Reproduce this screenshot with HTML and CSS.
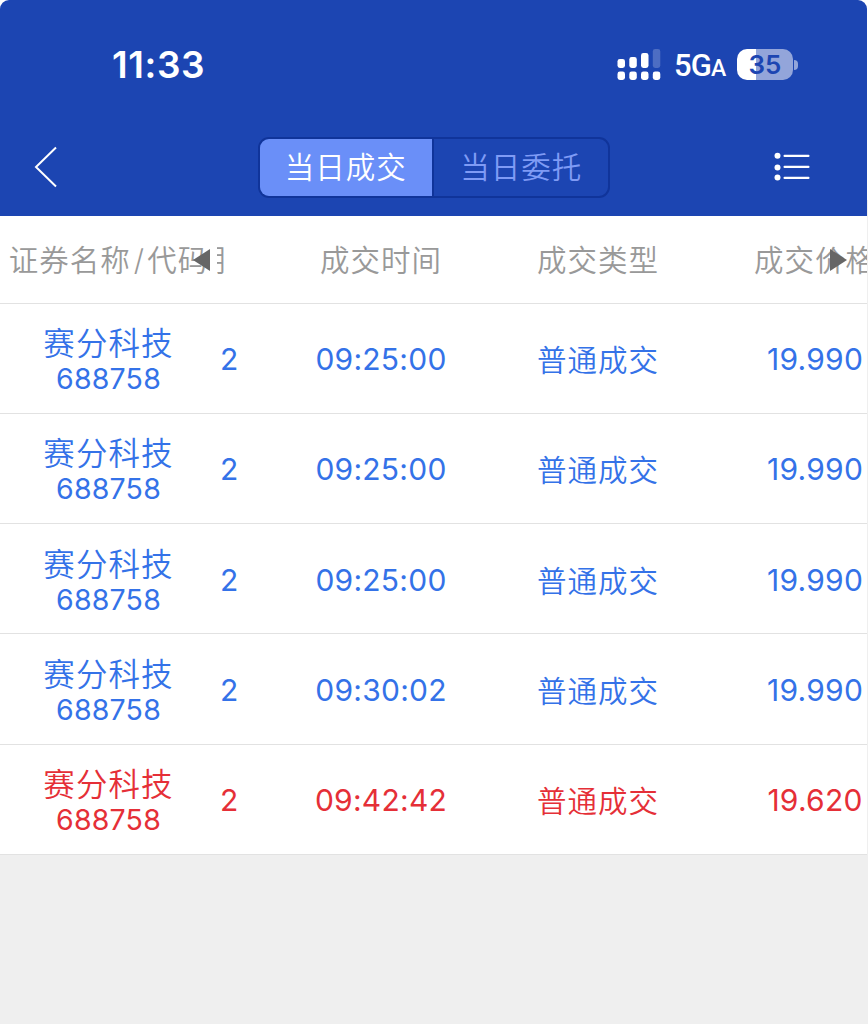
FILE: index.html
```html
<!DOCTYPE html>
<html lang="zh-CN">
<head>
  <meta charset="UTF-8">
  <meta name="viewport" content="width=device-width, initial-scale=1.0">
  <title>当日成交</title>
  <link rel="stylesheet" href="styles.css">
</head>
<body>

  <!-- Top area -->
  <header class="top">
    <div class="status-bar">
      <span class="clock">11:33</span>
      <div class="status-right">
        <svg class="signal" width="44" height="32" viewBox="0 0 44 32" fill="#fff">
          <rect x="0.5" y="10" width="7.5" height="9" rx="2.4"/>
          <rect x="12.3" y="8" width="7.5" height="11" rx="2.4"/>
          <rect x="24" y="4" width="7.5" height="15" rx="2.4"/>
          <rect x="35.8" y="0" width="7.5" height="19" rx="2.4" fill-opacity="0.22"/>
          <rect x="0.5" y="22.5" width="7.5" height="8.5" rx="2.4"/>
          <rect x="12.3" y="22.5" width="7.5" height="8.5" rx="2.4"/>
          <rect x="24" y="22.5" width="7.5" height="8.5" rx="2.4"/>
          <rect x="35.8" y="22.5" width="7.5" height="8.5" rx="2.4"/>
        </svg>
        <span class="network">5G<small>A</small></span>
        <span class="battery">35</span>
        <span class="battery-tip"></span>
      </div>
    </div>
    <nav class="nav-bar">
      <svg class="back" width="24" height="42" viewBox="0 0 24 42" fill="none" stroke="#fff" stroke-width="2">
        <path d="M22 1.5 L2 21 L22 40.5"/>
      </svg>
      <div class="tabs">
        <span class="tab active">当日成交</span>
        <span class="tab">当日委托</span>
      </div>
      <svg class="menu" width="36" height="30" viewBox="0 0 36 30" fill="#fff">
        <circle cx="3.5" cy="3.7" r="3"/>
        <circle cx="3.5" cy="15.4" r="3"/>
        <circle cx="3.5" cy="25.6" r="3"/>
        <rect x="9.5" y="2.8" width="26" height="2.3" rx="1"/>
        <rect x="9.5" y="13.8" width="26" height="2.3" rx="1"/>
        <rect x="9.5" y="24.8" width="26" height="2.3" rx="1"/>
      </svg>
    </nav>
  </header>

  <!-- Trade list -->
  <main class="table">
    <div class="row head">
      <div class="name">证券名称<span class="slash">/</span>代码</div>
      <div class="date"><span>期</span></div>
      <div class="cell">成交时间</div>
      <div class="cell">成交类型</div>
      <div class="cell">成交价格</div>
      <i class="arrow arrow-left"></i>
      <i class="arrow arrow-right"></i>
    </div>
    <div class="row buy">
      <div class="name">赛分科技<span class="code">688758</span></div>
      <div class="date num">2</div>
      <div class="cell num">09:25:00</div>
      <div class="cell">普通成交</div>
      <div class="cell num">19.990</div>
    </div>
    <div class="row buy">
      <div class="name">赛分科技<span class="code">688758</span></div>
      <div class="date num">2</div>
      <div class="cell num">09:25:00</div>
      <div class="cell">普通成交</div>
      <div class="cell num">19.990</div>
    </div>
    <div class="row buy">
      <div class="name">赛分科技<span class="code">688758</span></div>
      <div class="date num">2</div>
      <div class="cell num">09:25:00</div>
      <div class="cell">普通成交</div>
      <div class="cell num">19.990</div>
    </div>
    <div class="row buy">
      <div class="name">赛分科技<span class="code">688758</span></div>
      <div class="date num">2</div>
      <div class="cell num">09:30:02</div>
      <div class="cell">普通成交</div>
      <div class="cell num">19.990</div>
    </div>
    <div class="row sell">
      <div class="name">赛分科技<span class="code">688758</span></div>
      <div class="date num">2</div>
      <div class="cell num">09:42:42</div>
      <div class="cell">普通成交</div>
      <div class="cell num">19.620</div>
    </div>
  </main>

</body>
</html>
```
FILE: styles.css
```css
* {
  box-sizing: border-box;
}

body {
  margin: 0;
  height: 1024px;
  overflow: hidden;
  background: linear-gradient(#fff 200px, #efefef 200px);
  font-family: Inter, "Noto Sans CJK SC", sans-serif;
}

.top {
  width: 867px;
  height: 216px;
  background-color: #1c45b2;
  border-radius: 9px 9px 0 0;
  color: #fff;
}

.status-bar {
  height: 118px;
  padding: 11px 69px 0 112px;
  display: flex;
  align-items: center;
  justify-content: space-between;
}

.clock {
  font-size: 37px;
  font-weight: 600;
  letter-spacing: 0.6px;
}

.status-right {
  display: flex;
  align-items: center;
}

.network {
  margin-left: 13px;
  width: 51px;
  padding-top: 2px;
  font-family: Roboto, sans-serif;
  font-size: 31px;
  font-weight: 500;
  letter-spacing: -0.9px;
  white-space: nowrap;
}

.network small {
  font-size: 23px;
}

.battery {
  margin-left: 12px;
  width: 56px;
  height: 31px;
  border-radius: 10px;
  background: linear-gradient(90deg, #fff 19.5px, #93a5da 19.5px);
  color: #1c45b2;
  font-size: 26px;
  font-weight: 600;
  line-height: 31px;
  text-align: center;
}

.battery-tip {
  margin-left: 1px;
  width: 4px;
  height: 10px;
  border-radius: 0 5px 5px 0;
  background-color: #93a5da;
}

.nav-bar {
  height: 98px;
  padding: 0 57px 0 34px;
  display: flex;
  align-items: center;
  justify-content: space-between;
}

.tabs {
  display: flex;
  width: 352px;
  height: 61px;
  margin-left: 35px;
  border: 2px solid #10349a;
  border-radius: 11px;
  overflow: hidden;
}

.tab {
  flex: 1;
  padding-left: 1px;
  color: #7f9bf5;
  font-size: 29.5px;
  font-weight: 350;
  letter-spacing: 1px;
  line-height: 57px;
  text-align: center;
}

.tab.active {
  padding-left: 0;
  background-color: #6a8ff8;
  border-right: 2px solid #10349a;
  color: #fff;
}

.table {
  width: 867px;
  overflow: hidden;
  background-color: #fff;
}

.row {
  display: grid;
  grid-template-columns: 217px 55px 217px 217px 217px;
  align-items: center;
  height: 110.3px;
  border-bottom: 1.5px solid #e2e2e2;
  font-size: 29.5px;
  font-weight: 350;
  letter-spacing: 1px;
  text-align: center;
}

.head {
  position: relative;
  height: 87.5px;
  padding-bottom: 2px;
  color: #999;
}

.cell {
  padding-left: 1px;
}

.name {
  line-height: 38px;
}

.head .name {
  padding-top: 3px;
}

.slash {
  margin: 0 2px 0 3px;
}

.row:not(.head) .name {
  padding-top: 4px;
  font-size: 31.5px;
  letter-spacing: 1.1px;
}

.buy {
  color: #3472e8;
}

.sell {
  color: #e52f37;
}

.code {
  display: block;
  font-size: 28.5px;
  font-weight: 400;
  line-height: 32px;
  letter-spacing: 0.2px;
}

.date {
  overflow: hidden;
  text-align: left;
}

.date span {
  margin-left: -21px;
}

.date.num {
  padding-left: 3px;
}

.num {
  padding-top: 2px;
  font-size: 30px;
  font-weight: 400;
  letter-spacing: 0.25px;
}

/* scroll hints over the header */
.arrow {
  position: absolute;
  top: 33px;
  border: 11px solid transparent;
}

.arrow-left {
  left: 193px;
  border-left-width: 0;
  border-right: 17px solid #666;
}

.arrow-right {
  left: 830px;
  border-right-width: 0;
  border-left: 17px solid #666;
}
```
